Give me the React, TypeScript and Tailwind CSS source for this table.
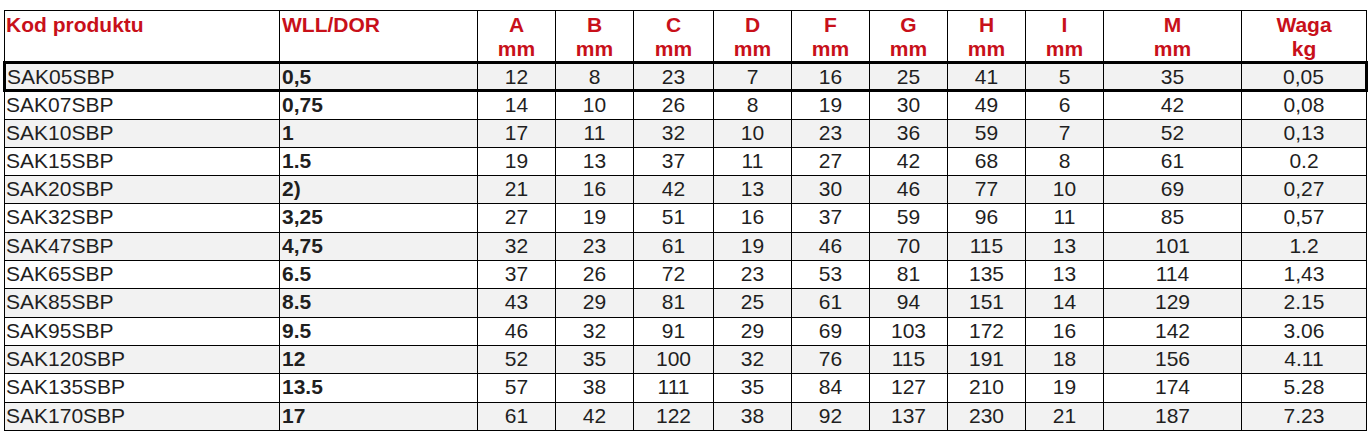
const headers = [
  { top: 'A', unit: 'mm' },
  { top: 'B', unit: 'mm' },
  { top: 'C', unit: 'mm' },
  { top: 'D', unit: 'mm' },
  { top: 'F', unit: 'mm' },
  { top: 'G', unit: 'mm' },
  { top: 'H', unit: 'mm' },
  { top: 'I', unit: 'mm' },
  { top: 'M', unit: 'mm' },
  { top: 'Waga', unit: 'kg' },
];

// kod, WLL/DOR, A, B, C, D, F, G, H, I, M, waga
const rows: string[][] = [
  ['SAK05SBP', '0,5', '12', '8', '23', '7', '16', '25', '41', '5', '35', '0,05'],
  ['SAK07SBP', '0,75', '14', '10', '26', '8', '19', '30', '49', '6', '42', '0,08'],
  ['SAK10SBP', '1', '17', '11', '32', '10', '23', '36', '59', '7', '52', '0,13'],
  ['SAK15SBP', '1.5', '19', '13', '37', '11', '27', '42', '68', '8', '61', '0.2'],
  ['SAK20SBP', '2)', '21', '16', '42', '13', '30', '46', '77', '10', '69', '0,27'],
  ['SAK32SBP', '3,25', '27', '19', '51', '16', '37', '59', '96', '11', '85', '0,57'],
  ['SAK47SBP', '4,75', '32', '23', '61', '19', '46', '70', '115', '13', '101', '1.2'],
  ['SAK65SBP', '6.5', '37', '26', '72', '23', '53', '81', '135', '13', '114', '1,43'],
  ['SAK85SBP', '8.5', '43', '29', '81', '25', '61', '94', '151', '14', '129', '2.15'],
  ['SAK95SBP', '9.5', '46', '32', '91', '29', '69', '103', '172', '16', '142', '3.06'],
  ['SAK120SBP', '12', '52', '35', '100', '32', '76', '115', '191', '18', '156', '4.11'],
  ['SAK135SBP', '13.5', '57', '38', '111', '35', '84', '127', '210', '19', '174', '5.28'],
  ['SAK170SBP', '17', '61', '42', '122', '38', '92', '137', '230', '21', '187', '7.23'],
];

const colWidths = ['w-[275px]', 'w-[198px]', 'w-[78px]', 'w-[78px]', 'w-[80px]', 'w-[78px]', 'w-[78px]', 'w-[78px]', 'w-[78px]', 'w-[78px]', 'w-[138px]', 'w-[125px]'];

export default function App() {
  return (
    <div className="min-h-screen bg-white pl-[3px] pt-[10px] font-['Liberation_Sans',Arial,sans-serif]">
      <table className="w-[1362px] table-fixed border-collapse text-[21px] text-[#1f1f1f]">
        <colgroup>
          {colWidths.map((w, i) => (
            <col key={i} className={w} />
          ))}
        </colgroup>
        <thead>
          <tr className="h-[51px]">
            <th className="border border-black px-[1px] pt-[2px] text-left align-top font-bold leading-[24px] text-[#c8101a]">
              Kod produktu
            </th>
            <th className="border border-black px-[2px] pt-[2px] text-left align-top font-bold leading-[24px] text-[#c8101a]">
              WLL/DOR
            </th>
            {headers.map((h) => (
              <th
                key={h.top}
                className="border border-black px-0 pt-[2px] text-center align-top font-bold leading-[24px] text-[#c8101a]"
              >
                {h.top}
                <br />
                {h.unit}
              </th>
            ))}
          </tr>
        </thead>
        <tbody>
          {rows.map((r, ri) => {
            const first = ri === 0;
            return (
              <tr key={r[0]} className={`h-[28.3px] ${ri % 2 === 0 ? 'bg-[#f2f2f2]' : 'bg-white'}`}>
                {r.map((v, ci) => {
                  const last = ci === r.length - 1;
                  return (
                    <td
                      key={ci}
                      className={[
                        'border border-black p-0 pt-[1px] align-top leading-[24px]',
                        first ? 'border-y-[3px]' : '',
                        first && ci === 0 ? 'border-l-[3px]' : '',
                        first && last ? 'border-r-[3px]' : '',
                        ci === 0 ? 'pl-[1px] text-left' : '',
                        ci === 1 ? 'pl-[2px] text-left font-bold' : '',
                        ci > 1 ? 'text-center' : '',
                      ].join(' ')}
                    >
                      {v}
                    </td>
                  );
                })}
              </tr>
            );
          })}
        </tbody>
      </table>
    </div>
  );
}
